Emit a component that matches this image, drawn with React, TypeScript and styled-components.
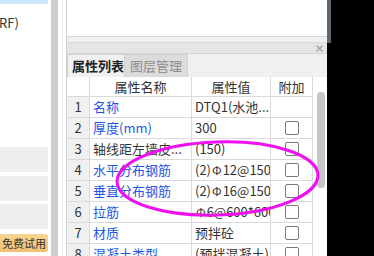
import React from 'react';
import styled, { createGlobalStyle } from 'styled-components';

const Global = createGlobalStyle`
  html, body { margin: 0; padding: 0; background: #000; }
  body { font-family: "Noto Sans CJK SC", "Noto Sans", sans-serif; }
`;

const Screen = styled.div`
  position: relative;
  display: flex;
  width: 374px;
  height: 256px;
  overflow: hidden;
  background: #000;
`;

const LeftPanel = styled.div`
  width: 51px;
  flex: none;
  background: #fff;
  display: flex;
  flex-direction: column;
`;

const SelectedStrip = styled.div`
  width: 48px;
  height: 4px;
  background: #cce8ff;
`;

const LeftLabel = styled.div`
  margin-top: 12px;
  margin-left: -1px;
  font-size: 13px;
  line-height: 13px;
  color: #333;
  white-space: nowrap;
`;

const LeftBlock = styled.div<{ $top: number }>`
  width: 48px;
  height: 25px;
  margin-top: ${(p) => p.$top}px;
  background: #efefef;
`;

const TrialButton = styled.div`
  width: 48px;
  height: 18px;
  margin-top: 5px;
  border-radius: 0 3px 3px 0;
  background: linear-gradient(#f8d493, #f0c070);
  color: #333;
  font-size: 11px;
  line-height: 18px;
  text-align: center;
  white-space: nowrap;
`;

const Splitter = styled.div`
  width: 7px;
  flex: none;
  background: #cdcdcd;
`;

const Gutter = styled.div`
  width: 8px;
  flex: none;
  background: #fff;
  display: flex;
  justify-content: center;
`;

const GutterLine = styled.div`
  width: 1px;
  background: #ececec;
`;

const RightArea = styled.div`
  width: 260px;
  flex: none;
  border-left: 1px solid #cfcfcf;
  display: flex;
  flex-direction: column;
  background: #f0f0f0;
`;

const TopBox = styled.div`
  height: 36px;
  background: #fff;
  border-bottom: 1px solid #d6d6d6;
`;

const PanelHeader = styled.div`
  margin-top: 5px;
  height: 10px;
  background: #e5e5e5;
  border-top: 1px solid #dadada;
  border-bottom: 1px solid #d4d4d4;
  display: flex;
  justify-content: flex-end;
  align-items: center;
  padding-right: 4px;
`;

const Tabs = styled.div`
  height: 23px;
  display: flex;
  background: #f0f0f0;
`;

const Tab = styled.div<{ $active?: boolean }>`
  height: 23px;
  box-sizing: border-box;
  padding: 0 4px;
  border: 1px solid #d2d2d2;
  border-bottom: none;
  border-left: ${(p) => (p.$active ? '1px solid #d2d2d2' : 'none')};
  background: ${(p) => (p.$active ? '#f0f0f0' : '#dcdcdc')};
  color: ${(p) => (p.$active ? '#222' : '#8c8c8c')};
  font-size: 13px;
  font-weight: ${(p) => (p.$active ? 600 : 400)};
  line-height: 22px;
  white-space: nowrap;
  width: ${(p) => (p.$active ? 58 : 63)}px;
  text-align: center;
`;

const TableWrap = styled.div`
  flex: 1;
  display: flex;
  background: #fff;
  overflow: hidden;
`;

const Grid = styled.div`
  display: grid;
  grid-template-columns: 23px 102px 79px 41px;
  grid-auto-rows: 21px;
  grid-template-rows: 20px;
  align-content: start;
  border-right: 1px solid #d9d9d9;
`;

const Cell = styled.div<{ $kind?: 'num' | 'name' | 'value' | 'head' | 'add'; $blue?: boolean }>`
  box-sizing: border-box;
  border-right: 1px solid #dadada;
  border-bottom: 1px solid #dadada;
  font-size: 13px;
  line-height: 20px;
  white-space: nowrap;
  overflow: hidden;
  display: flex;
  align-items: center;
  color: ${(p) => (p.$blue ? '#1f56e6' : '#333')};
  background: ${(p) => (p.$kind === 'num' ? '#f0f0f0' : '#fff')};
  justify-content: ${(p) =>
    p.$kind === 'num' || p.$kind === 'head' || p.$kind === 'add' ? 'center' : 'flex-start'};
  padding-left: ${(p) => (p.$kind === 'name' || p.$kind === 'value' ? 3 : 0)}px;
  &:nth-child(4n) {
    border-right: none;
  }
`;

const CheckBox = styled.div`
  width: 12px;
  height: 12px;
  border: 1px solid #7a7a7a;
  border-radius: 2px;
  background: #fff;
`;

const Rebar = styled.span`
  display: inline-block;
  font-size: 12px;
  margin: 0 1px;
`;

const ScrollTrack = styled.div`
  width: 15px;
  flex: none;
  display: flex;
  justify-content: center;
  padding-top: 15px;
  background: #fff;
`;

const Thumb = styled.div`
  width: 8px;
  height: 96px;
  border-radius: 4px;
  background: #c6c6c6;
`;

const EdgeColumn = styled.div`
  width: 4px;
  flex: none;
  display: flex;
  flex-direction: column;
  background: #000;
`;

const EdgeTop = styled.div`
  height: 43px;
  background: #5f6870;
`;

const Annotation = styled.svg`
  position: absolute;
  left: 0;
  top: 0;
  pointer-events: none;
`;

const CloseIcon = () => (
  <svg width="7" height="7" viewBox="0 0 7 7">
    <path d="M0.5 0.5 L6.5 6.5 M6.5 0.5 L0.5 6.5" stroke="#a0a0a0" strokeWidth="1.2" />
  </svg>
);

type Row = { name: string; blue: boolean; value: React.ReactNode; check: boolean };

const R = () => <Rebar>Φ</Rebar>;

const rows: Row[] = [
  { name: '名称', blue: true, value: 'DTQ1(水池...', check: false },
  { name: '厚度(mm)', blue: true, value: '300', check: true },
  { name: '轴线距左墙皮...', blue: false, value: '(150)', check: true },
  { name: '水平分布钢筋', blue: true, value: <>(2)<R />12@150</>, check: true },
  { name: '垂直分布钢筋', blue: true, value: <>(2)<R />16@150</>, check: true },
  { name: '拉筋', blue: true, value: <><R />6@600*600</>, check: true },
  { name: '材质', blue: true, value: '预拌砼', check: true },
  { name: '混凝土类型', blue: true, value: '(预拌混凝土)', check: true },
];

export default function App() {
  return (
    <>
      <Global />
      <Screen>
        <LeftPanel>
          <SelectedStrip />
          <LeftLabel>RF)</LeftLabel>
          <LeftBlock $top={118} />
          <LeftBlock $top={4} />
          <LeftBlock $top={3} />
          <TrialButton>免费试用</TrialButton>
        </LeftPanel>
        <Splitter />
        <Gutter>
          <GutterLine />
        </Gutter>
        <RightArea>
          <TopBox />
          <PanelHeader>
            <CloseIcon />
          </PanelHeader>
          <Tabs>
            <Tab $active>属性列表</Tab>
            <Tab>图层管理</Tab>
          </Tabs>
          <TableWrap>
            <Grid>
              <Cell $kind="head" />
              <Cell $kind="head">属性名称</Cell>
              <Cell $kind="head">属性值</Cell>
              <Cell $kind="head">附加</Cell>
              {rows.map((r, i) => (
                <React.Fragment key={i}>
                  <Cell $kind="num">{i + 1}</Cell>
                  <Cell $kind="name" $blue={r.blue}>{r.name}</Cell>
                  <Cell $kind="value">{r.value}</Cell>
                  <Cell $kind="add">{r.check && <CheckBox />}</Cell>
                </React.Fragment>
              ))}
            </Grid>
            <ScrollTrack>
              <Thumb />
            </ScrollTrack>
          </TableWrap>
        </RightArea>
        <EdgeColumn>
          <EdgeTop />
        </EdgeColumn>
        <Annotation width="374" height="256" viewBox="0 0 374 256">
          <ellipse
            cx="217.5"
            cy="178.5"
            rx="100.5"
            ry="36.5"
            transform="rotate(-2 217.5 178.5)"
            fill="none"
            stroke="#ee11ee"
            strokeWidth="3"
          />
        </Annotation>
      </Screen>
    </>
  );
}
